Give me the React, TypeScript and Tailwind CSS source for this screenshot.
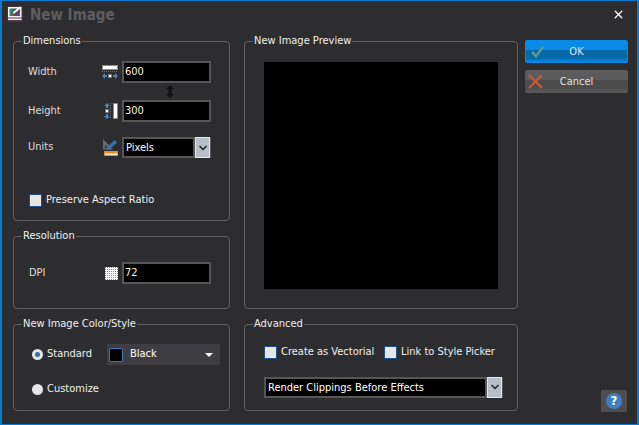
import { ReactNode } from "react";
import { ChevronDown, X } from "lucide-react";

const font = "font-['DejaVu_Sans_Condensed','DejaVu_Sans',sans-serif]";

function Group({ title, className, children }: { title: string; className: string; children: ReactNode }) {
  return (
    <fieldset className={`relative border border-[#626264] rounded-[4px] px-0 ${className}`}>
      <legend className="ml-[8px] px-[1px] text-[11px] leading-[14px] text-[#f0f0f0]">{title}</legend>
      {children}
    </fieldset>
  );
}

function Field({ value }: { value: string }) {
  return (
    <div className="w-[89px] h-[22px] bg-black border-2 border-[#565656] pl-[1px] text-[11px] leading-[18px] text-[#fff4d8]">
      {value}
    </div>
  );
}

function Combo({ value, widthClass }: { value: string; widthClass: string }) {
  return (
    <div className={`flex h-[21px] bg-[#565656] p-[2px] pr-[1px] ${widthClass}`}>
      <div className="flex-1 bg-black pl-[2px] text-[11px] leading-[17px] text-white">{value}</div>
      <div className="w-[15px] ml-[2px] -my-[2px] bg-[#b9bfca] border border-[#e8e8e8] flex items-center justify-center">
        <ChevronDown size={12} strokeWidth={3.5} className="text-[#2a2a2a]" />
      </div>
    </div>
  );
}

function Check({ label, className = "" }: { label: string; className?: string }) {
  return (
    <div className={`flex items-center gap-[4px] text-[11px] text-[#f0f0f0] ${className}`}>
      <span className="w-[13px] h-[13px] border border-[#1f4f86] bg-[#e6e6e6]" />
      {label}
    </div>
  );
}

function Radio({ label, on }: { label: string; on?: boolean }) {
  return (
    <div className="flex items-center gap-[4px] text-[11px] text-[#f0f0f0]">
      <span className="w-[11px] h-[11px] rounded-full bg-[#e6e6e6] flex items-center justify-center">
        {on && <span className="w-[5px] h-[5px] rounded-full bg-[#2f6fb0]" />}
      </span>
      {label}
    </div>
  );
}

function AppIcon() {
  return (
    <svg width="16" height="16" viewBox="0 0 16 16">
      <defs>
        <linearGradient id="screen" x1="0" y1="0" x2="1" y2="0">
          <stop offset="0" stopColor="#2f9a6a" />
          <stop offset="0.6" stopColor="#35506a" />
          <stop offset="1" stopColor="#b03070" />
        </linearGradient>
      </defs>
      <rect x="0.5" y="0.5" width="15" height="15" fill="#5c3a52" />
      <rect x="1" y="1" width="13.5" height="10.5" fill="#f2f2f2" />
      <rect x="2.5" y="2.5" width="10.5" height="7.5" fill="url(#screen)" />
      <path d="M4 9.5 L6.5 6.5 L8 8 Z" fill="#d8352c" />
      <path d="M6.5 7 L13.5 1" stroke="#fff" strokeWidth="1.8" />
      <rect x="1" y="12.5" width="13.5" height="1.5" fill="#f2f2f2" />
    </svg>
  );
}

function WidthIcon() {
  return (
    <svg width="16" height="14" viewBox="0 0 16 14">
      <rect x="0" y="0" width="16" height="5" fill="#8a8a8a" />
      <rect x="1" y="1" width="14" height="3" fill="#fff" />
      <path d="M0 6.5 H16" stroke="#6c6c6c" strokeDasharray="1 1" />
      <rect x="6" y="9" width="4" height="4" fill="#777" />
      <rect x="7" y="10" width="2" height="2" fill="#fff" />
      <path d="M0 11 L3 8 V14 Z M16 11 L13 8 V14 Z" fill="#4d82bd" />
      <path d="M2 10 H5 V12 H2 Z M11 10 H14 V12 H11 Z" fill="#4d82bd" />
    </svg>
  );
}

function HeightIcon() {
  return (
    <svg width="14" height="16" viewBox="0 0 14 16">
      <rect x="9" y="0" width="5" height="16" fill="#8a8a8a" />
      <rect x="10" y="1" width="3" height="14" fill="#fff" />
      <path d="M6.5 0 V16" stroke="#6c6c6c" strokeDasharray="1 1" />
      <rect x="1" y="6" width="4" height="4" fill="#777" />
      <rect x="2" y="7" width="2" height="2" fill="#fff" />
      <path d="M3 0 L6 3 H0 Z M3 16 L6 13 H0 Z" fill="#4d82bd" />
      <path d="M2 2 H4 V5 H2 Z M2 11 H4 V14 H2 Z" fill="#4d82bd" />
    </svg>
  );
}

function UnitsIcon() {
  return (
    <svg width="16" height="17" viewBox="0 0 16 17">
      <path d="M1 0 L11 10.5 H1 Z M3 6 V9 H6 Z" fill="#6a6a6c" fillRule="evenodd" />
      <path d="M5 8 L12.5 1 L15 3.5 L7.5 10.5 L4.5 11 Z" fill="#3d6fa8" />
      <rect x="2" y="12" width="14" height="5" fill="#e88a22" />
      <rect x="3" y="14" width="12" height="2" fill="#f6e6c8" />
      <path d="M5 14 V15 M8 14 V15 M11 14 V15" stroke="#e88a22" />
    </svg>
  );
}

function DpiIcon() {
  return (
    <svg width="13" height="13" viewBox="0 0 13 13">
      <defs>
        <pattern id="dots" width="2" height="2" patternUnits="userSpaceOnUse">
          <rect width="2" height="2" fill="#fff" />
          <rect width="1" height="1" fill="#8a8a8a" />
        </pattern>
      </defs>
      <rect width="13" height="13" fill="url(#dots)" />
    </svg>
  );
}

function Label({ children }: { children: ReactNode }) {
  return <span className="w-[74px] text-[11px] text-[#dedede]">{children}</span>;
}

export default function App() {
  return (
    <div className={`w-[639px] h-[425px] overflow-hidden bg-[#2d2d30] border-x-2 border-y border-[#0a7ad1] flex flex-col ${font}`}>
      <div className="h-[26px] flex items-center pl-[5px] pr-[12px] shrink-0">
        <AppIcon />
        <span className="ml-[7px] mt-[2px] text-[15px] font-bold text-[#5e5e60]">New Image</span>
        <X size={13} strokeWidth={2.5} className="ml-auto text-white" />
      </div>

      <div className="flex pl-[11px] gap-[14px] pt-[7px]">
        <div className="w-[217px] flex flex-col gap-[8px]">
          <Group title="Dimensions" className="h-[187px]">
            <div className="pl-[14px] pt-[13px]">
              <div className="flex items-center h-[22px]">
                <Label>Width</Label>
                <WidthIcon />
                <div className="ml-[4px]"><Field value="600" /></div>
              </div>
              <div className="h-[17px] pl-[138px] flex items-center">
                <svg width="8" height="13" viewBox="0 0 8 13">
                  <path d="M4 0 L8 4 H5.5 V9 H8 L4 13 L0 9 H2.5 V4 H0 Z" fill="#111" />
                </svg>
              </div>
              <div className="flex items-center h-[22px]">
                <Label>Height</Label>
                <span className="w-[16px] flex justify-end"><HeightIcon /></span>
                <div className="ml-[4px]"><Field value="300" /></div>
              </div>
              <div className="flex items-center h-[21px] mt-[15px]">
                <Label>Units</Label>
                <UnitsIcon />
                <div className="ml-[4px]"><Combo value="Pixels" widthClass="w-[89px]" /></div>
              </div>
              <Check label="Preserve Aspect Ratio" className="mt-[34px] ml-[1px]" />
            </div>
          </Group>

          <Group title="Resolution" className="h-[80px]">
            <div className="flex items-center h-[22px] pl-[15px] mt-[19px]">
              <span className="w-[74px] text-[11px] text-[#dedede]">DPI</span>
              <span className="ml-[2px]"><DpiIcon /></span>
              <div className="ml-[4px]"><Field value="72" /></div>
            </div>
          </Group>

          <Group title="New Image Color/Style" className="h-[94px]">
            <div className="flex items-center pl-[18px] mt-[13px]">
              <span className="w-[75px]"><Radio label="Standard" on /></span>
              <div className="w-[113px] h-[21px] bg-[#3e3e42] flex items-center pl-[2px] pr-[7px] text-[11px] text-white">
                <span className="w-[14px] h-[14px] bg-black border border-[#3f78b5] rounded-[2px]" />
                <span className="ml-[7px]">Black</span>
                <span className="ml-auto w-0 h-0 border-x-[4px] border-x-transparent border-t-[4px] border-t-white" />
              </div>
            </div>
            <div className="pl-[18px] mt-[16px]">
              <Radio label="Customize" />
            </div>
          </Group>
        </div>

        <div className="w-[274px] flex flex-col gap-[8px]">
          <Group title="New Image Preview" className="h-[275px]">
            <div className="w-[234px] h-[227px] mt-[14px] ml-[19px] bg-black" />
          </Group>
          <Group title="Advanced" className="h-[94px]">
            <div className="flex pl-[19px] mt-[13px]">
              <Check label="Create as Vectorial" className="w-[120px]" />
              <Check label="Link to Style Picker" />
            </div>
            <div className="ml-[19px] mt-[16px]">
              <Combo value="Render Clippings Before Effects" widthClass="w-[239px]" />
            </div>
          </Group>
        </div>

        <div className="w-[103px] flex flex-col gap-[7px] pt-[6px] -ml-[7px]">
          <div className="relative h-[23px] rounded-[2px] border border-[#0a8ae8] bg-[linear-gradient(#0a8ae6_0%,#0a8ae6_45%,#0768a8_45%,#0768a8_80%,#0a8ae6_100%)] text-center text-[11px] leading-[21px] text-[#d8e8f0]">
            <svg className="absolute left-[5px] top-[5px]" width="13" height="12" viewBox="0 0 13 12">
              <path d="M1 6 L5 10 L12 1" stroke="#5f9a8c" strokeWidth="2.5" fill="none" />
            </svg>
            OK
          </div>
          <div className="relative h-[23px] rounded-[2px] bg-[linear-gradient(#5b5b5b_0%,#5b5b5b_45%,#4c4c4c_45%,#4c4c4c_80%,#5b5b5b_100%)] text-center text-[11px] leading-[23px] text-[#e4e4e4]">
            <svg className="absolute left-[3px] top-[4px]" width="15" height="15" viewBox="0 0 15 15">
              <path d="M1 1 L14 14 M14 1 L1 14" stroke="#d9522c" strokeWidth="2.2" />
            </svg>
            Cancel
          </div>
        </div>
      </div>

      <div className="self-end mr-[10px] mt-[-21px] w-[26px] h-[22px] rounded-[2px] bg-[#4e4e50] flex items-center justify-center">
        <span className="w-[16px] h-[16px] rounded-full bg-[#3f7fc0] text-white text-[13px] leading-[16px] font-bold text-center">?</span>
      </div>
    </div>
  );
}
